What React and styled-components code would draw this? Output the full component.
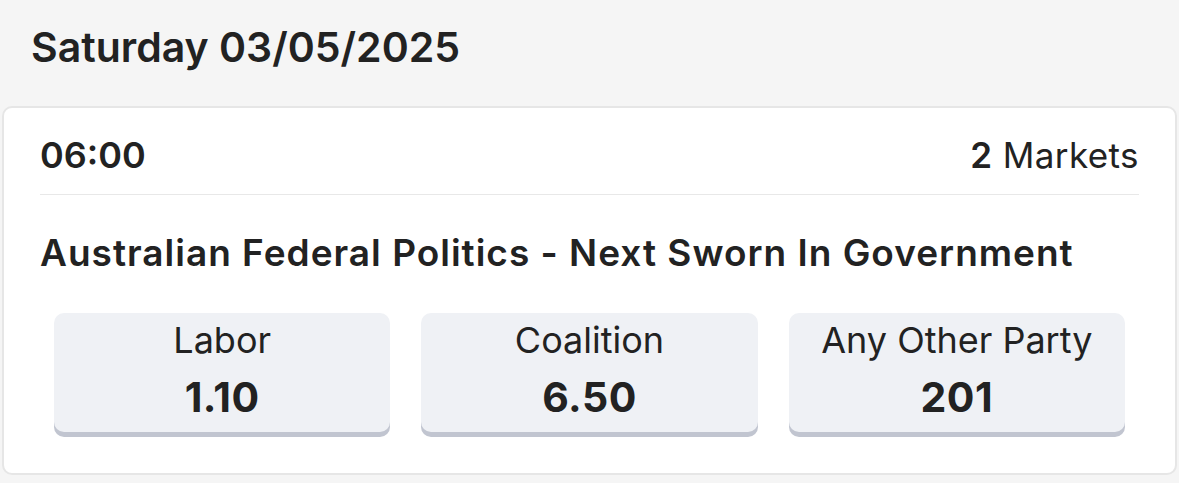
import React from 'react';
import styled, { createGlobalStyle } from 'styled-components';

const GlobalStyle = createGlobalStyle`
  html, body {
    margin: 0;
    padding: 0;
    background: #f5f5f5;
  }
  body {
    font-family: Inter, "Noto Sans", "Liberation Sans", sans-serif;
    color: #222222;
  }
`;

const Page = styled.div`
  width: 1179px;
  height: 483px;
  overflow: hidden;
  padding: 0 2px;
  box-sizing: border-box;
`;

const DayHeader = styled.h2`
  margin: 0;
  height: 106px;
  display: flex;
  align-items: center;
  padding: 0 0 12px 29px;
  box-sizing: border-box;
  font-size: 41px;
  font-weight: 600;
  color: #222;
`;

const Card = styled.section`
  background: #fff;
  border: 2px solid #e6e6e6;
  border-radius: 10px;
  padding: 0 36px 41px;
`;

const EventRow = styled.div`
  display: flex;
  justify-content: space-between;
  align-items: center;
  padding: 25px 0 17px;
  line-height: 44px;
  border-bottom: 1px solid #e8e8e8;
`;

const Time = styled.span`
  font-size: 36px;
  font-weight: 600;
`;

const Markets = styled.span`
  font-size: 35px;
  font-weight: 400;
  letter-spacing: 0.4px;

  b {
    font-weight: 600;
  }
`;

const MarketTitle = styled.h3`
  margin: 36px 0 38px;
  font-size: 37px;
  line-height: 44px;
  font-weight: 600;
  letter-spacing: 1px;
`;

const Selections = styled.div`
  display: grid;
  grid-template-columns: repeat(3, 1fr);
  gap: 31px;
  padding: 0 14px;
`;

const OddsButton = styled.button`
  display: flex;
  flex-direction: column;
  align-items: center;
  height: 119px;
  padding: 5px 0 0;
  border: none;
  border-radius: 10px;
  background: #eff1f5;
  box-shadow: 0 5px 0 #c1c5d0;
  font-family: inherit;
  color: #222;
  cursor: pointer;
`;

const Selection = styled.span`
  font-size: 36px;
  line-height: 44px;
  font-weight: 400;
`;

const Price = styled.span`
  margin-top: 13px;
  font-size: 41px;
  line-height: 44px;
  font-weight: 700;
  letter-spacing: 0.5px;
`;

const selections = [
  { name: 'Labor', price: '1.10' },
  { name: 'Coalition', price: '6.50' },
  { name: 'Any Other Party', price: '201' },
];

const App = () => (
  <Page>
    <GlobalStyle />
    <DayHeader>Saturday 03/05/2025</DayHeader>
    <Card>
      <EventRow>
        <Time>06:00</Time>
        <Markets><b>2</b> Markets</Markets>
      </EventRow>
      <MarketTitle>Australian Federal Politics - Next Sworn In Government</MarketTitle>
      <Selections>
        {selections.map(sel => (
          <OddsButton key={sel.name}>
            <Selection>{sel.name}</Selection>
            <Price>{sel.price}</Price>
          </OddsButton>
        ))}
      </Selections>
    </Card>
  </Page>
);

export default App;
